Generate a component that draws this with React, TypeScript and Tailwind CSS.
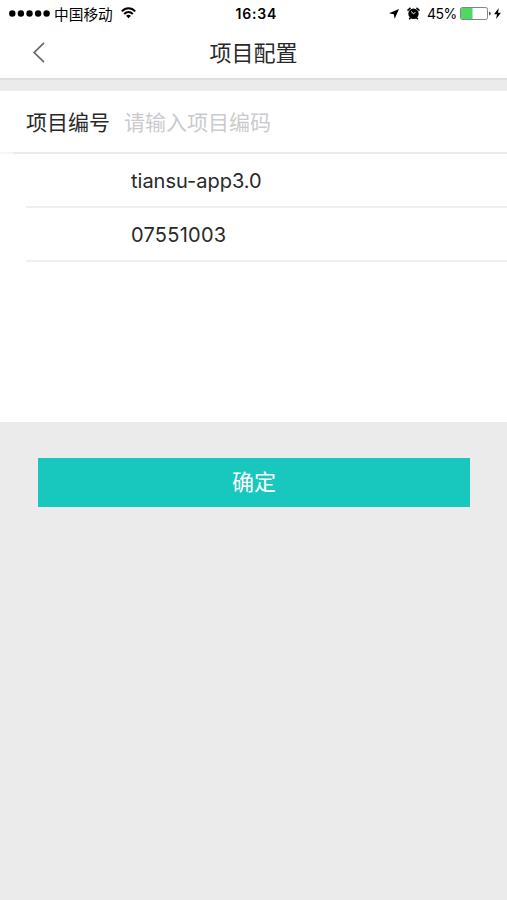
import React from 'react';

const suggestions = [
  { text: 'tiansu-app3.0', spacing: 'tracking-normal' },
  { text: '07551003', spacing: 'tracking-[0.25px]' },
];

function StatusBar() {
  return (
    <div className="relative flex h-[27px] items-center justify-between pl-[9px] pr-[6px] text-black">
      <div className="flex items-center">
        <svg width="42" height="8" viewBox="0 0 42 8" aria-hidden="true">
          {[3.3, 11.9, 20.5, 29.1, 37.6].map((cx) => (
            <circle key={cx} cx={cx} cy="3.5" r="3.2" />
          ))}
        </svg>
        <span className="ml-[3px] pt-[3px] text-[14.7px] leading-[27px]">中国移动</span>
        <svg className="ml-[8px] mb-[2px]" width="15" height="12" viewBox="0 0 15 12" fill="none" stroke="currentColor" strokeWidth="2" aria-hidden="true">
          <path d="M.8 4.4C4.7.3 10.3.3 14.2 4.4" />
          <path d="M3.2 7C5.8 4.4 9.2 4.4 11.8 7" />
          <path d="M7.5 11.2 5.1 8.8C6.5 7.5 8.5 7.5 9.9 8.8Z" fill="currentColor" stroke="none" />
        </svg>
      </div>
      <span className="absolute left-[235.5px] text-[14px] font-semibold leading-[27px] tracking-[0.8px]">16:34</span>
      <div className="flex items-center">
        <svg width="10" height="10" viewBox="0 0 10 10" aria-hidden="true">
          <path d="M10 0 5.7 9.8 4.8 5.2 0 4.3Z" />
        </svg>
        <svg className="ml-[8px]" width="13" height="13" viewBox="0 0 13 13" aria-hidden="true">
          <circle cx="6.5" cy="6.8" r="5.2" />
          <path d="M.5 3.6 3.5.9M12.5 3.6 9.5.9M2.2 12.3 3.7 10.6M10.8 12.3 9.3 10.6" stroke="currentColor" strokeWidth="1.5" />
          <path d="M4.1 4.5 6.6 6.9 8.3 5.2" fill="none" stroke="white" strokeWidth="1" />
        </svg>
        <span className="ml-[7px] w-[30px] whitespace-nowrap text-[14px] leading-[27px] tracking-[-0.5px]">45%</span>
        <svg className="ml-[3px]" width="31" height="13" viewBox="0 0 31 13" aria-hidden="true">
          <rect x=".5" y=".5" width="27" height="12" rx="1.8" fill="white" stroke="#858585" />
          <path d="M1 1H12.5V12H1Z" fill="#4cd964" />
          <path d="M29 4.5Q30.8 5 30.8 6.5T29 8.5Z" fill="#555" />
        </svg>
        <svg className="ml-[3px]" width="7" height="11" viewBox="0 0 7 11" aria-hidden="true">
          <path d="M4.8 0 0 6.2H3L2.1 11 7 4.7H4Z" />
        </svg>
      </div>
    </div>
  );
}

export default function App() {
  return (
    <main className="min-h-[900px] w-full bg-[#ebebeb] font-[Inter,'Noto_Sans_CJK_SC',sans-serif] text-[#292929]">
      <header className="h-[80px] border-b-2 border-[#dfdfdf] bg-white">
        <StatusBar />
        <div className="grid h-[51px] grid-cols-[1fr_auto_1fr] items-center">
          <button className="ml-[33px] w-[12px]" aria-label="返回">
            <svg width="12" height="21" viewBox="0 0 12 21" fill="none" stroke="#666" strokeWidth="1.7" aria-hidden="true">
              <path d="M11 .8 1.2 10.5 11 20.2" />
            </svg>
          </button>
          <h1 className="text-[22px] leading-[50px]">项目配置</h1>
        </div>
      </header>

      <section className="mt-[11px] h-[331px] bg-white">
        <label className="flex h-[61px] items-center pl-[26px] pt-[2px] text-[21px]">
          <span className="w-[98px]">项目编号</span>
          <input
            className="h-[50px] min-w-0 flex-1 bg-transparent outline-none placeholder:text-[#cbcbcf]"
            placeholder="请输入项目编码"
          />
        </label>
        <div className="flex h-[2px] bg-[#ebebeb]">
          <span className="w-[13px] bg-[#f5f5f5]" />
        </div>
        <ul className="ml-[26px]">
          {suggestions.map(({ text, spacing }) => (
            <li key={text} className="flex h-[54px] items-center border-b-2 border-[#efefef] pl-[105px] pt-[2px] text-[20px]">
              <span className={spacing}>{text}</span>
            </li>
          ))}
        </ul>
      </section>

      <button className="ml-[38px] mt-[36px] block h-[49px] w-[432px] bg-[#18c7be] text-[22px] text-white">确定</button>
    </main>
  );
}
